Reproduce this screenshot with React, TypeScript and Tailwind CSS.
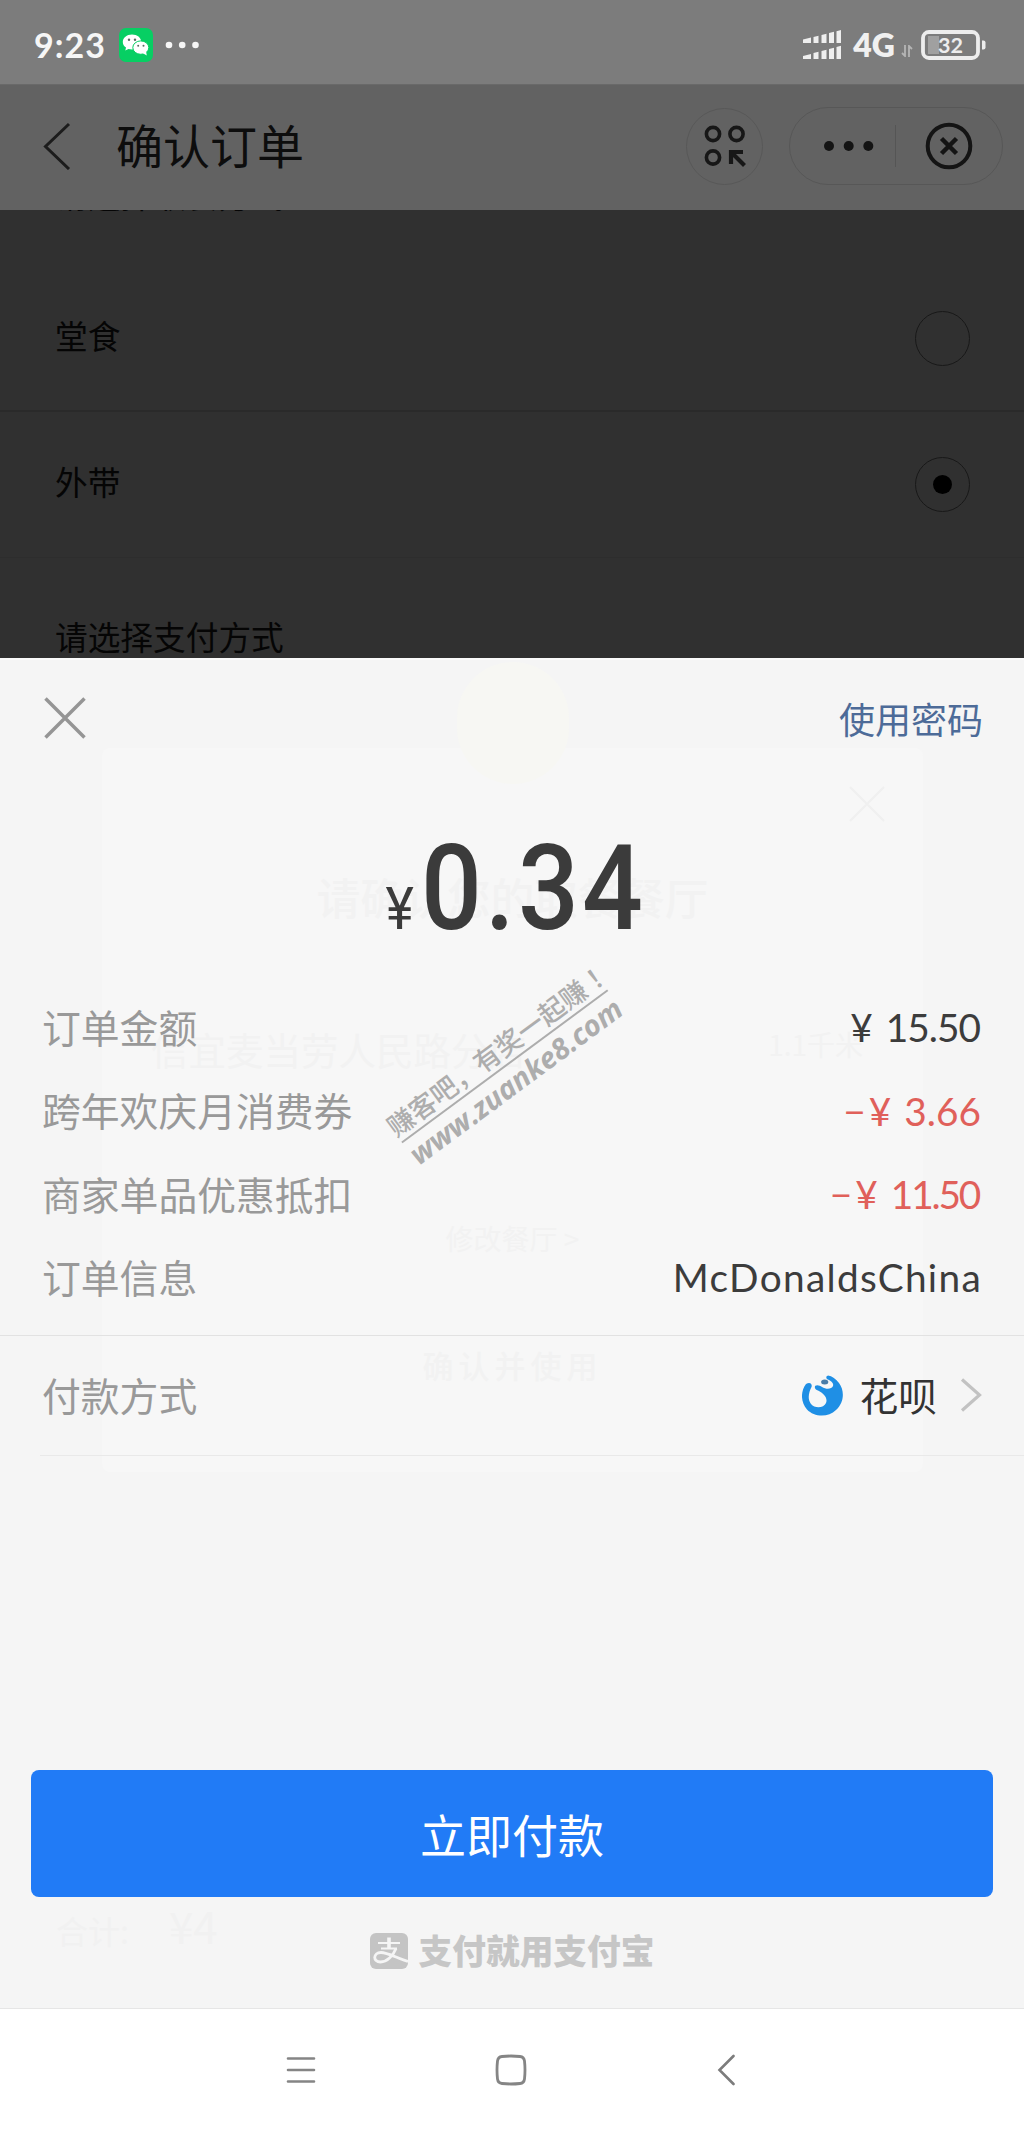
interface DetailRow {
  label: string
  sign?: string
  amount?: string
  text?: string
}

const details: DetailRow[] = [
  { label: "订单金额", amount: "15.50" },
  { label: "跨年欢庆月消费券", sign: "−", amount: "3.66" },
  { label: "商家单品优惠抵扣", sign: "−", amount: "11.50" },
  { label: "订单信息", text: "McDonaldsChina" },
]

function WechatBadge() {
  return (
    <svg viewBox="0 0 34 34" className="w-[34px] h-[34px] ml-[13px]">
      <rect width="34" height="34" rx="7" fill="#07cf63" />
      <path d="M13 6.5c-5.2 0-9.2 3.3-9.2 7.4 0 2.3 1.2 4.3 3.2 5.7l-.7 3 3.2-1.7c1.1.3 2.2.5 3.5.5 5.2 0 9.2-3.3 9.2-7.5S18.2 6.5 13 6.500z" fill="#fff" />
      <ellipse cx="21.8" cy="19.6" rx="8" ry="6.7" fill="#fff" stroke="#07cf63" strokeWidth="1" />
      <path d="M23.5 25l4.3 2.6-.8-4z" fill="#fff" />
      <g fill="#5c6b62">
        <circle cx="10" cy="11.7" r="1.2" />
        <circle cx="16" cy="11.7" r="1.2" />
        <circle cx="19.2" cy="17.7" r="1" />
        <circle cx="24.5" cy="17.7" r="1" />
      </g>
    </svg>
  )
}

function SignalBars() {
  return (
    <svg viewBox="0 0 38 30" className="w-[38px] h-[30px]" fill="#eee">
      <path d="M0 9.5l8-2V13H0zM10.5 7l5-1.3V13h-5zM18.5 5l5-1.3V13h-5zM26 3l5-1.3V13h-5zM33.5 1.2l4.5-1.2v13h-4.5z" />
      <path d="M0 26l8-2v5H0zM10.5 23l5-1.3V29h-5zM18.5 21l5-1.3V29h-5zM26 19l5-1.3V29h-5zM33.5 17l4.5-1.2V29h-4.5z" />
    </svg>
  )
}

function StatusBar() {
  return (
    <div className="h-[84px] bg-[#7c7c7c] flex items-center justify-between pl-[34px] pr-[37px]">
      <div className="flex items-center pt-[5px]">
        <span className="font-['Lato'] font-bold text-[34px] leading-none tracking-[1px] text-[#f6f6f6]">9:23</span>
        <WechatBadge />
        <svg viewBox="0 0 34 8" className="w-[34px] h-2 ml-3" fill="#f6f6f6">
          <circle cx="4" cy="4" r="3.3" />
          <circle cx="17.2" cy="4" r="3.3" />
          <circle cx="30.5" cy="4" r="3.3" />
        </svg>
      </div>
      <div className="flex items-center pt-[6px]">
        <SignalBars />
        <span className="font-['Lato'] font-extrabold text-[32px] leading-none ml-[12px] text-[#f0f0f0]">4G</span>
        <svg viewBox="0 0 12 12" className="w-3 h-3 ml-[6px] mt-[12px]" fill="none" stroke="#b5b5b5" strokeWidth="1.8">
          <path d="M4 0v11L1 8M8 12V1l3 3" />
        </svg>
        <svg viewBox="0 0 66 30" className="w-[66px] h-[30px] ml-[8px]">
          <rect x="7" y="6" width="11" height="18" fill="#a0a0a0" />
          <rect x="2" y="2" width="55" height="26" rx="6" fill="none" stroke="#ededed" strokeWidth="3.8" />
          <path d="M61 10.5h1.5q2 0 2 2v5q0 2-2 2H61z" fill="#ededed" />
          <text x="29.5" y="22.5" textAnchor="middle" fontFamily="Lato" fontSize="21.5" fontWeight="700" fill="#ededed">32</text>
        </svg>
      </div>
    </div>
  )
}

function Header() {
  return (
    <div className="h-[126px] bg-[#626262] flex items-center pl-[43px] pr-[21px] pb-[3px] border-t border-[#696969]">
      <svg viewBox="0 0 28 48" className="w-7 h-12" fill="none" stroke="#1c1c1c" strokeWidth="3">
        <path d="M26 2L2.5 24.5 26 47" />
      </svg>
      <h1 className="ml-[45px] text-[47px] leading-none text-[#0d0d0d] pb-[5px]">确认订单</h1>
      <div className="ml-auto w-[77px] h-[77px] rounded-full border border-[#585858] flex items-center justify-center">
        <svg viewBox="0 0 42 42" className="w-[42px] h-[42px]" fill="none" stroke="#171717" strokeWidth="3.6">
          <circle cx="9" cy="9" r="6.6" />
          <circle cx="32.5" cy="9" r="6.6" />
          <circle cx="9" cy="32.5" r="6.6" />
          <path d="M27 39V27h12M27.5 27.5l13 13" strokeWidth="4.2" />
        </svg>
      </div>
      <div className="ml-[26px] w-[214px] h-[78px] rounded-full border border-[#575757] flex items-center">
        <svg viewBox="0 0 50 10" className="w-[50px] h-[10px] ml-[34px]" fill="#141414">
          <circle cx="5" cy="5" r="5" />
          <circle cx="24.7" cy="5" r="5" />
          <circle cx="44.3" cy="5" r="5" />
        </svg>
        <div className="w-px h-[42px] bg-[#555] ml-[21px]" />
        <svg viewBox="0 0 48 48" className="w-12 h-12 ml-[29px] mb-px" fill="none" stroke="#141414" strokeWidth="4">
          <circle cx="24" cy="24" r="21.3" />
          <path d="M16.5 16.5l15 15M31.5 16.5l-15 15" strokeWidth="4.5" />
        </svg>
      </div>
    </div>
  )
}

function Radio({ checked }: { checked?: boolean }) {
  return (
    <div className="w-[55px] h-[55px] rounded-full border-[1.5px] border-[#181818] flex items-center justify-center">
      {checked && <div className="w-[19px] h-[19px] rounded-full bg-black" />}
    </div>
  )
}

function OrderPage() {
  return (
    <div className="h-[448px] bg-[#303030] text-[32.7px] leading-none text-[#050505] overflow-hidden">
      <div className="h-[56px] overflow-hidden pl-[55px]">
        <p className="-mt-[32px]">请选择取餐方式</p>
      </div>
      <div className="h-[146px] flex items-center justify-between pl-[55px] pr-[54px] border-b-2 border-[#2a2a2a]">
        <span className="-mt-[6px]">堂食</span>
        <Radio />
      </div>
      <div className="h-[146px] flex items-center justify-between pl-[55px] pr-[54px] border-b border-[#2d2d2d]">
        <span className="-mt-[6px]">外带</span>
        <Radio checked />
      </div>
      <p className="pl-[55px] pt-[62px]">请选择支付方式</p>
    </div>
  )
}

// store dialog that still shows faintly through the translucent sheet
function FadedDialog() {
  return (
    <div className="absolute left-[102px] top-[88px] w-[821px] h-[724px] rounded-lg bg-[#f7f7f7] text-[#f2f2f2] flex flex-col items-center">
      <div className="absolute -top-[86px] left-[355px] w-[112px] h-[122px] rounded-full bg-[#f7f7f3]" />
      <svg viewBox="0 0 36 36" className="absolute right-[38px] top-[38px] w-9 h-9" stroke="#f0f0f0" strokeWidth="2">
        <path d="M1 1l34 34M35 1L1 35" />
      </svg>
      <p className="mt-[127px] text-[43.5px] leading-none font-medium">请确认您的取餐餐厅</p>
      <div className="mt-[111px] w-full flex justify-between pl-[49px] pr-[60px] text-[37.5px] leading-none">
        <span>信宜麦当劳人民路分店</span>
        <span className="text-[28px]">1.1千米</span>
      </div>
      <p className="mt-[157px] text-[28px] leading-none">修改餐厅 &gt;</p>
      <p className="mt-[97px] text-[31px] leading-none font-medium tracking-[5px]">确认并使用</p>
    </div>
  )
}

function HuabeiIcon() {
  return (
    <svg viewBox="0 0 41 41" className="w-[41px] h-[41px]" fill="#1f8fe5">
      <path d="M4 9C-2 17-1 28 5 34.5 12 42 26 43 34 35 42 28 43 16 37 8 34 4 30 1 26 .5 23.5 1.5 24 3.5 26 4.5 29 6 32 8 31 11 29.5 14.5 24 14.5 20 12 18 10.5 15 9.5 13.3 10.8 12 12.5 13.5 14.5 16 15.5 22 18.5 26 23 24 28 22 33 13 34 9 29 5 24 7 17 9.5 12 10.5 9 8 6.5 4 9z" />
      <ellipse cx="22.7" cy="7" rx="3.6" ry="2.5" fill="#4a7da8" />
    </svg>
  )
}

function AlipayIcon() {
  return (
    <svg viewBox="0 0 38 36" className="w-[38px] h-9" fill="none" stroke="#f5f5f5">
      <rect width="38" height="36" rx="6" fill="#c4c4c4" stroke="none" />
      <path d="M8 10h22M11 15.5h16" strokeWidth="2" />
      <path d="M19 4.5v11" strokeWidth="3.6" />
      <path d="M26 15.5C23 23 17 29 10.5 29 2.5 29 3 19.5 11 19.5c6 0 15 5 27 9" strokeWidth="2.8" />
    </svg>
  )
}

function Watermark() {
  return (
    <div className="absolute left-[346px] top-[368px] w-[320px] h-[80px] -rotate-[36.5deg] flex flex-col items-center justify-center text-[#adadad] font-bold">
      <p className="ml-[8px] text-[26.8px] leading-none whitespace-nowrap mb-[3px] font-medium">
        赚客吧，有奖一起赚<span className="font-['Noto_Sans_CJK_TC',sans-serif]">！</span>
      </p>
      <div className="w-[256px] h-[1.5px] bg-[#adadad]" />
      <p className="font-['Open_Sans'] italic text-[29px] leading-[34px] whitespace-nowrap">www.zuanke8.com</p>
    </div>
  )
}

function DetailValue({ row }: { row: DetailRow }) {
  if (row.text) {
    return <span className="font-['Lato'] tracking-[1.3px] text-[#3c3c3c]">{row.text}</span>
  }
  return (
    <span className={`font-['Lato'] flex ${row.sign ? "text-[#e0605a]" : "text-[#3c3c3c]"}`}>
      {row.sign && <span className="mr-[3px]">{row.sign}</span>}
      <span className="mr-[13px]">¥</span>
      <span className={row.amount === "11.50" ? "tracking-[-2.2px] mr-[3px]" : row.amount === "15.50" ? "tracking-[-1px] mr-[2px]" : "mr-px"}>
        {row.amount}
      </span>
    </span>
  )
}

function PaySheet() {
  return (
    <div className="relative h-[1350px] bg-[#f5f5f5] border-t-2 border-[#fbfbfb]">
      <FadedDialog />
      <div className="relative h-full flex flex-col">
        <div className="flex items-start justify-between pl-[44px] pr-[41px] pt-[37px]">
          <svg viewBox="0 0 42 42" className="w-[42px] h-[42px]" fill="none" stroke="#959595" strokeWidth="3.5">
            <path d="M1.5 1.5l39 39M40.5 1.5l-39 39" />
          </svg>
          <span className="text-[36px] leading-none text-[#4d6b98] mt-[3px]">使用密码</span>
        </div>

        <div className="h-[209px] flex items-end justify-center font-['Roboto'] font-medium text-[#3b3b3b] leading-none">
          <div className="flex items-baseline origin-center scale-x-[0.9] ml-[7px]">
            <span className="text-[60px] font-normal">¥</span>
            <span className="text-[119px] tracking-[3.5px] ml-[8px]">0.34</span>
          </div>
        </div>

        <div className="mt-[38px] pl-[42px] pr-[42px]">
          {details.map((row) => (
            <div key={row.label} className="h-[83.4px] flex items-center justify-between text-[38.8px] leading-none">
              <span className="text-[#999] pb-[3px]">{row.label}</span>
              <DetailValue row={row} />
            </div>
          ))}
        </div>

        <div className="mt-[15px] h-[120px] border-t border-[#e2e2e2] flex items-center pl-[42px] pr-[42px] text-[38.8px] leading-none">
          <span className="text-[#999] pb-px">付款方式</span>
          <div className="ml-auto flex items-center">
            <HuabeiIcon />
            <span className="ml-[16px] text-[#333] pb-px">花呗</span>
            <svg viewBox="0 0 22 34" className="w-[22px] h-[34px] ml-[23px]" fill="none" stroke="#c2c2c2" strokeWidth="3.2">
              <path d="M2 1.5L19.5 17 2 32.5" />
            </svg>
          </div>
        </div>
        <div className="ml-[40px] h-px bg-[#e9e9e9]" />

        <button className="mt-auto mx-[31px] h-[127px] shrink-0 rounded-[8px] bg-[#217bf6] text-white text-[46px] leading-none pb-[2px]">
          立即付款
        </button>
        <div className="h-[111px] shrink-0 flex items-center justify-center text-[#c6c6c6] pb-[3px]">
          <AlipayIcon />
          <span className="text-[33.7px] leading-none font-black ml-[11px] pb-[3px]">支付就用支付宝</span>
        </div>
      </div>
      <p className="absolute left-[56px] top-[1243px] text-[32px] leading-none text-[#f1f1f1] whitespace-nowrap">
        合计:<span className="text-[44px] ml-[40px]">¥4</span>
      </p>
      <Watermark />
    </div>
  )
}

function NavBar() {
  return (
    <div className="h-[123px] bg-white border-t border-[#e6e6e6] flex items-center justify-between pl-[286px] pr-[289px]">
      <svg viewBox="0 0 30 30" className="w-[30px] h-[30px]" stroke="#858585" strokeWidth="2.6" strokeLinecap="round">
        <path d="M2 3.5h26M2 15h26M2 26.5h26" />
      </svg>
      <svg viewBox="0 0 32 32" className="w-8 h-8 mr-[11px]" fill="none" stroke="#858585" strokeWidth="2.8">
        <path d="M7 2.5Q16 1.5 25 2.5 29 3 29.5 7 30.5 16 29.5 25 29 29 25 29.5 16 30.5 7 29.5 3 29 2.5 25 1.5 16 2.5 7 3 3 7 2.5z" />
      </svg>
      <svg viewBox="0 0 18 32" className="w-[18px] h-8" fill="none" stroke="#7c7c7c" strokeWidth="2.6" strokeLinecap="round">
        <path d="M16.5 2L2.5 16l14 14" />
      </svg>
    </div>
  )
}

export default function App() {
  return (
    <div className="w-[1024px] h-[2131px] overflow-hidden font-['Noto_Sans_CJK_SC',sans-serif]">
      <StatusBar />
      <Header />
      <OrderPage />
      <PaySheet />
      <NavBar />
    </div>
  )
}
